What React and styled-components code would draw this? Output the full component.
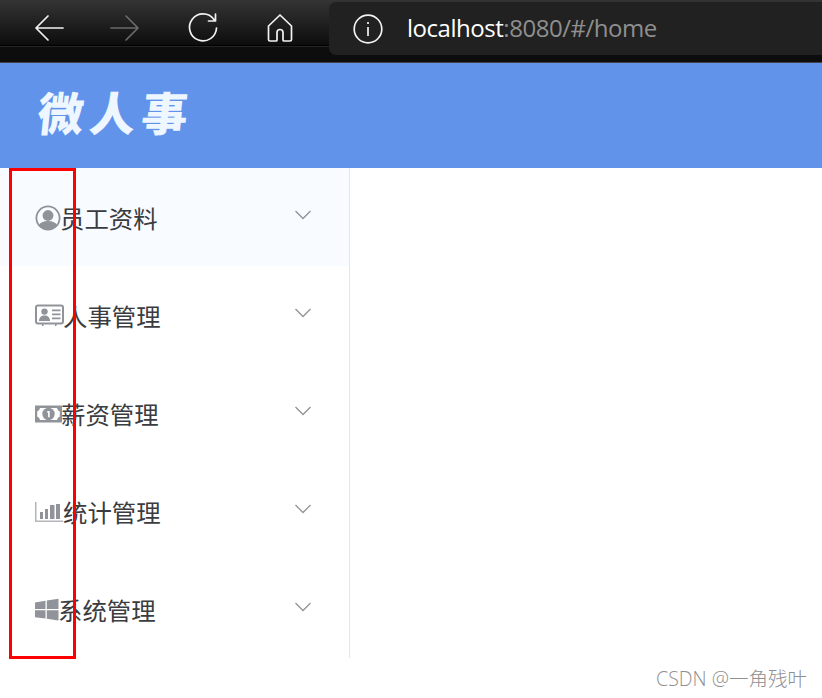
import React from "react";
import styled, { createGlobalStyle } from "styled-components";

const Global = createGlobalStyle`
  html, body { margin: 0; padding: 0; background: #fff; }
  body { font-family: "Noto Sans CJK SC", "Liberation Sans", sans-serif; }
`;

const Page = styled.div`
  position: relative;
  width: 822px;
  height: 698px;
  overflow: hidden;
  background: #fff;
`;

const BrowserBar = styled.div`
  height: 63px;
  box-sizing: border-box;
  display: flex;
  align-items: flex-start;
  background: linear-gradient(#343434 0, #0d0d0d 45px, #0d0d0d 100%);
  border-bottom: 1px solid #444;
  position: relative;
`;

const NavDivider = styled.div`
  position: absolute;
  left: 0;
  right: 0;
  top: 45px;
  height: 2px;
  background: linear-gradient(#000 50%, #262626 50%);
`;

const NavIcons = styled.div`
  width: 329px;
  height: 56px;
  flex: none;
  position: relative;
  z-index: 1;
  display: flex;
  align-items: center;
  padding: 0 0 0 32px;
  box-sizing: border-box;
`;

const NavSlot = styled.svg`
  width: 34px;
  height: 34px;
  margin-right: ${(p) => p.$gap}px;
  margin-top: -1px;
  flex: none;
  fill: none;
  stroke: ${(p) => (p.$dim ? "#6a6a6a" : "#f2f2f2")};
  stroke-width: 1.7;
  stroke-linecap: round;
  stroke-linejoin: round;
`;

const AddressBar = styled.div`
  flex: 1;
  position: relative;
  z-index: 1;
  margin-top: 2px;
  height: 53px;
  background: #212121;
  border-radius: 7px 0 0 7px;
  display: flex;
  align-items: center;
  padding-left: 21px;
  box-sizing: border-box;
`;

const InfoIcon = styled.svg`
  width: 34px;
  height: 34px;
  margin-right: 23px;
  flex: none;
  fill: none;
  stroke: #f2f2f2;
  stroke-width: 1.7;
`;

const Url = styled.div`
  font-family: "Open Sans", "Liberation Sans", sans-serif;
  font-size: 24px;
  letter-spacing: -0.47px;
  color: #8f8f8f;
  white-space: nowrap;
  margin-top: -2px;
`;

const Host = styled.span`
  color: #fff;
`;

const Header = styled.header`
  height: 105px;
  background: #6193eb;
  display: flex;
  align-items: center;
  padding-left: 38px;
`;

const Title = styled.h1`
  margin: -10px 0 0;
  font-family: "Noto Sans CJK SC", sans-serif;
  font-size: 46px;
  font-weight: 900;
  line-height: 1;
  letter-spacing: 6px;
  color: #eef6ff;
  transform: skewX(-6deg);
  transform-origin: left center;
`;

const Sidebar = styled.nav`
  width: 350px;
  box-sizing: border-box;
  border-right: 1px solid #e6e6e6;
`;

const MenuRow = styled.div`
  height: 98px;
  display: flex;
  align-items: center;
  padding-left: 35px;
  padding-right: 37px;
  background: ${(p) => (p.$active ? "#f8fbff" : "#fff")};
`;

const MenuIcon = styled.svg`
  width: ${(p) => p.$w}px;
  height: 28px;
  flex: none;
  margin-right: -1px;
  fill: #909399;
`;

const MenuLabel = styled.span`
  flex: 1;
  font-size: 24.4px;
  line-height: 28px;
  font-weight: 400;
  color: #3a3c40;
  margin-top: 1px;
`;

const Chevron = styled.svg`
  width: 18px;
  height: 12px;
  flex: none;
  margin-top: -5px;
  fill: none;
  stroke: #909399;
  stroke-width: 1.3;
`;

const RedBox = styled.div`
  position: absolute;
  left: 9px;
  top: 168px;
  width: 67px;
  height: 491px;
  box-sizing: border-box;
  border: 3px solid #ff0000;
  pointer-events: none;
`;

const Watermark = styled.div`
  position: absolute;
  right: 15px;
  top: 666px;
  font-family: "Open Sans", "Noto Sans CJK SC", sans-serif;
  font-size: 19.5px;
  line-height: 26px;
  font-weight: 300;
  color: #8f8f8f;
  white-space: nowrap;
`;

const UserIcon = () => (
  <MenuIcon $w={26} viewBox="0 0 26 28">
    <circle cx="13" cy="15" r="11.6" fill="none" stroke="#909399" strokeWidth="1.8" />
    <circle cx="13" cy="12.500" r="5.400" />
    <path d="M3.600 22.500C5 19.500 8.500 18 13 18s8 1.500 9.400 4.500C20 25.500 16.800 26.700 13 26.700S6 25.500 3.600 22.500z" />
  </MenuIcon>
);

const CardIcon = () => (
  <MenuIcon $w={29} viewBox="0 0 29 28">
    <rect x="1" y="4.500" width="27" height="18" rx="2" fill="none" stroke="#909399" strokeWidth="2" />
    <circle cx="9.500" cy="10.600" r="3.200" />
    <path d="M4 20c0-3.600 2.200-5.600 5.500-5.600S15 16.400 15 20z" />
    <path d="M17 8.500h8.500v1.700H17zM17 12.500h8.500v1.700H17zM17 16.500h8.500v1.700H17z" />
    <path d="M7 23h1.500v2H7zM20 23h1.500v2H20z" />
  </MenuIcon>
);

const MoneyIcon = () => (
  <MenuIcon $w={27} viewBox="0 0 27 28">
    <path fillRule="evenodd" d="M0 6.500h27v17H0zM5 9C4.500 11 3.500 12 2.200 12.300v5.400C3.500 18 4.500 19 5 21h17c.5-2 1.500-3 2.800-3.300v-5.400C23.500 12 22.500 11 22 9z" />
    <circle cx="13.500" cy="15" r="6.200" />
    <path d="M12.300 12h2.400v6.200h-1.600v-4.400h-.8z" fill="#fff" />
  </MenuIcon>
);

const ChartIcon = () => (
  <MenuIcon $w={29} viewBox="0 0 29 28">
    <path d="M0 5h1.500v18.500H28V25H0z" fill="#b4b6ba" />
    <path d="M5 15h3v7H5zM10 12h3v10h-3zM15 8h4.500v14H15zM21 7h4v15h-4z" />
  </MenuIcon>
);

const WindowsIcon = () => (
  <MenuIcon $w={24} viewBox="0 0 24 28">
    <path d="M0 7.500l10.500-1.700v8.200H0zM11.800 5.600L23.500 3.800V14H11.800zM0 15.300h10.500v8.300L0 22.200zM11.800 15.300h11.700v10.200l-11.700-1.700z" />
  </MenuIcon>
);

const menu = [
  { label: "员工资料", Icon: UserIcon, active: true },
  { label: "人事管理", Icon: CardIcon },
  { label: "薪资管理", Icon: MoneyIcon },
  { label: "统计管理", Icon: ChartIcon },
  { label: "系统管理", Icon: WindowsIcon },
];

export default function App() {
  return (
    <Page>
      <Global />
      <BrowserBar>
        <NavDivider />
        <NavIcons>
          <NavSlot $gap={43} viewBox="0 0 34 34">
            <path d="M31 17H4M16 5L4 17l12 12" />
          </NavSlot>
          <NavSlot $gap={43} $dim viewBox="0 0 34 34">
            <path d="M2 17h27M17 5l12 12-12 12" />
          </NavSlot>
          <NavSlot $gap={43} viewBox="0 0 34 34">
            <path d="M28 8.500A13.500 13.500 0 1 0 30.500 17M29.500 3v7h-7" />
          </NavSlot>
          <NavSlot $gap={0} viewBox="0 0 34 34">
            <path d="M17 4L5.500 15v13.500a1.500 1.500 0 0 0 1.500 1.500h6a1 1 0 0 0 1-1v-7.500a3 3 0 0 1 6 0V29a1 1 0 0 0 1 1h6a1.500 1.500 0 0 0 1.500-1.500V15z" />
          </NavSlot>
        </NavIcons>
        <AddressBar>
          <InfoIcon viewBox="0 0 34 34">
            <circle cx="18" cy="17" r="13.800" />
            <path d="M18 15v9M18 10v2" />
          </InfoIcon>
          <Url>
            <Host>localhost</Host>:8080/#/home
          </Url>
        </AddressBar>
      </BrowserBar>
      <Header>
        <Title>微人事</Title>
      </Header>
      <Sidebar>
        {menu.map(({ label, Icon, active }) => (
          <MenuRow key={label} $active={active}>
            <Icon />
            <MenuLabel>{label}</MenuLabel>
            <Chevron viewBox="0 0 18 12">
              <path d="M1.500 2L9 9.500 16.500 2" />
            </Chevron>
          </MenuRow>
        ))}
      </Sidebar>
      <RedBox />
      <Watermark>CSDN @一角残叶</Watermark>
    </Page>
  );
}
